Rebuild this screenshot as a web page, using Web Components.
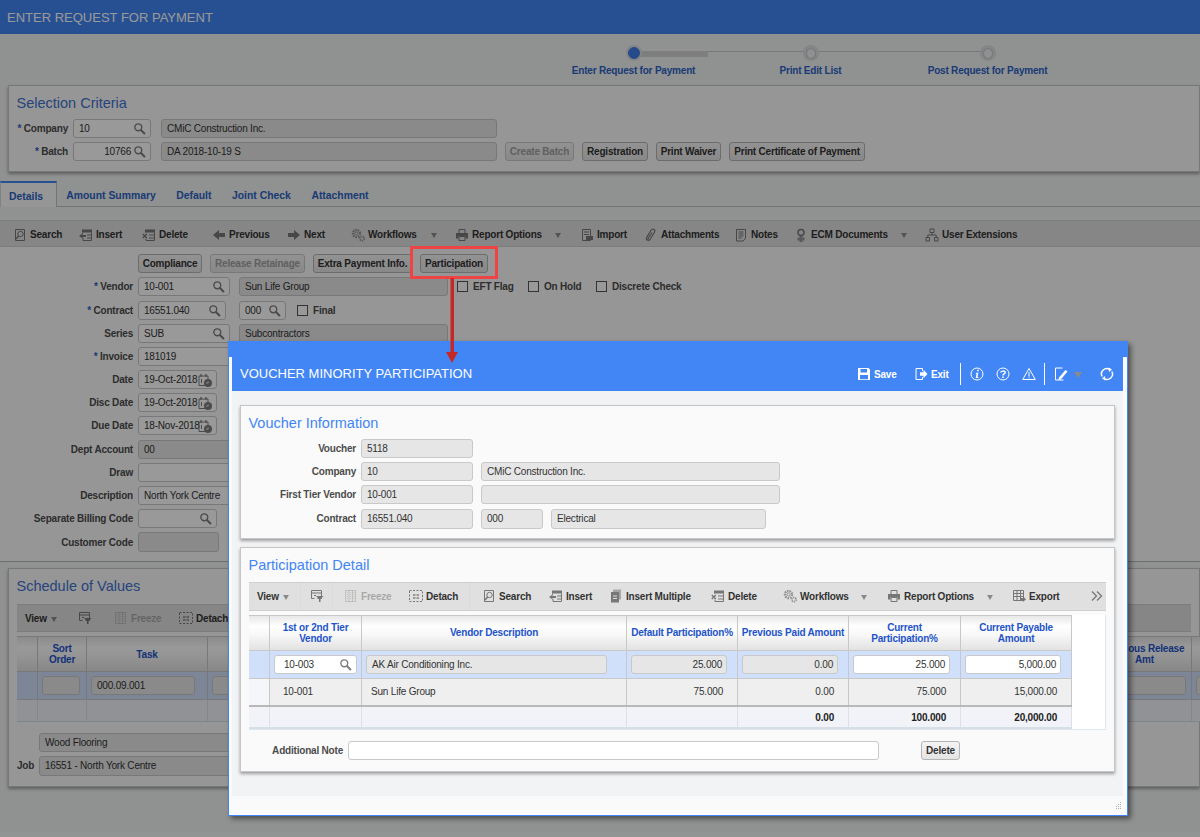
<!DOCTYPE html>
<html>
<head>
<meta charset="utf-8">
<title>Enter Request for Payment</title>
<style>
  html, body { margin: 0; height: 837px; overflow: hidden; background: #f6f7f7; }
  body { font: 10px "Liberation Sans", Arial, sans-serif; letter-spacing: -.2px; color: #333; }
</style>
</head>
<body>

<request-page>
  <page-header>ENTER REQUEST FOR PAYMENT</page-header>
  <train-stops>
    <train-stop active>Enter Request for Payment</train-stop>
    <train-stop>Print Edit List</train-stop>
    <train-stop last>Post Request for Payment</train-stop>
  </train-stops>

  <ui-panel heading="Selection Criteria" style="margin-left:8px">
    <form-row label="Company" req lw="51">
      <ui-field value="10" w="78" lookup></ui-field>
      <ui-field value="CMiC Construction Inc." w="336" kind="ro" style="margin-left:2px"></ui-field>
    </form-row>
    <form-row label="Batch" req lw="51">
      <ui-field value="10766" w="78" lookup align="right"></ui-field>
      <ui-field value="DA 2018-10-19 S" w="336" kind="ro" style="margin-left:2px"></ui-field>
      <ui-button w="69" disabled>Create Batch</ui-button>
      <ui-button w="66">Registration</ui-button>
      <ui-button w="65">Print Waiver</ui-button>
      <ui-button w="136">Print Certificate of Payment</ui-button>
    </form-row>
  </ui-panel>

  <tab-bar>
    <tab-item active w="57">Details</tab-item>
    <tab-item style="margin-left:-1px">Amount Summary</tab-item>
    <tab-item>Default</tab-item>
    <tab-item>Joint Check</tab-item>
    <tab-item>Attachment</tab-item>
  </tab-bar>

  <tool-bar start="13" style="margin-top:13px;padding-top:2px">
    <tool-item icon="search" w="66">Search</tool-item>
    <tool-item icon="insert" w="63">Insert</tool-item>
    <tool-item icon="delete" w="70">Delete</tool-item>
    <tool-item icon="prev" w="75">Previous</tool-item>
    <tool-item icon="next" w="64">Next</tool-item>
    <tool-item icon="gears" w="80">Workflows</tool-item>
    <tool-caret w="24"></tool-caret>
    <tool-item icon="print" w="100">Report Options</tool-item>
    <tool-caret w="25"></tool-caret>
    <tool-item icon="import" w="64">Import</tool-item>
    <tool-item icon="clip" w="90">Attachments</tool-item>
    <tool-item icon="notes" w="60">Notes</tool-item>
    <tool-item icon="ecm" w="107">ECM Documents</tool-item>
    <tool-caret w="24"></tool-caret>
    <tool-item icon="tree" w="100">User Extensions</tool-item>
  </tool-bar>

  <form-area>
    <form-row lw="125">
      <ui-button w="64">Compliance</ui-button>
      <ui-button w="95" disabled>Release Retainage</ui-button>
      <ui-button w="99">Extra Payment Info.</ui-button>
      <ui-button w="68">Participation</ui-button>
    </form-row>
    <form-row label="Vendor" req lw="125">
      <ui-field value="10-001" w="92" lookup></ui-field>
      <ui-field value="Sun Life Group" w="209" kind="ro" style="margin-left:1px"></ui-field>
      <check-box style="margin-left:1px;width:63px">EFT Flag</check-box>
      <check-box style="width:60px">On Hold</check-box>
      <check-box>Discrete Check</check-box>
    </form-row>
    <form-row label="Contract" req lw="125">
      <ui-field value="16551.040" w="88" lookup></ui-field>
      <ui-field value="000" w="47" lookup style="margin-left:5px"></ui-field>
      <check-box style="margin-left:3px">Final</check-box>
    </form-row>
    <form-row label="Series" lw="125">
      <ui-field value="SUB" w="92" lookup></ui-field>
      <ui-field value="Subcontractors" w="209" kind="ro" style="margin-left:1px"></ui-field>
    </form-row>
    <form-row label="Invoice" req lw="125"><ui-field value="181019" w="92"></ui-field></form-row>
    <form-row label="Date" lw="125"><ui-field value="19-Oct-2018" w="79" date></ui-field></form-row>
    <form-row label="Disc Date" lw="125"><ui-field value="19-Oct-2018" w="79" date></ui-field></form-row>
    <form-row label="Due Date" lw="125"><ui-field value="18-Nov-2018" w="79" date></ui-field></form-row>
    <form-row label="Dept Account" lw="125"><ui-field value="00" w="92" kind="ro"></ui-field></form-row>
    <form-row label="Draw" lw="125"><ui-field w="92"></ui-field></form-row>
    <form-row label="Description" lw="125"><ui-field value="North York Centre" w="92"></ui-field></form-row>
    <form-row label="Separate Billing Code" lw="125"><ui-field w="79" lookup></ui-field></form-row>
    <form-row label="Customer Code" lw="125"><ui-field w="81" kind="ro" style="height:20px"></ui-field></form-row>
  </form-area>

  <ui-panel heading="Schedule of Values" style="margin:6px 0 0 8px">
    <tool-bar start="8" style="height:28px;margin-top:2px">
      <tool-item w="26">View</tool-item>
      <tool-caret w="27"></tool-caret>
      <tool-item icon="filter" w="36"></tool-item>
      <tool-item icon="freeze" w="65" disabled>Freeze</tool-item>
      <tool-item icon="detach" w="60">Detach</tool-item>
    </tool-bar>
    <data-grid cols="21px 49px 121px 66px 824px 94px 80px">
      <grid-row kind="head" h="36">
        <grid-cell></grid-cell><grid-cell>Sort<br>Order</grid-cell><grid-cell>Task</grid-cell><grid-cell>Code</grid-cell><grid-cell></grid-cell><grid-cell>Previous Release<br>Amt</grid-cell><grid-cell></grid-cell>
      </grid-row>
      <grid-row kind="sel" h="28">
        <grid-cell></grid-cell>
        <grid-cell pad="4"><ui-field w="38" kind="ro"></ui-field></grid-cell>
        <grid-cell pad="4"><ui-field value="000.09.001" w="104" kind="ro"></ui-field></grid-cell>
        <grid-cell pad="4"><ui-field w="58" kind="ro"></ui-field></grid-cell>
        <grid-cell></grid-cell>
        <grid-cell pad="4"><ui-field w="84" kind="ro"></ui-field></grid-cell>
        <grid-cell pad="4"><ui-field w="70" kind="ro"></ui-field></grid-cell>
      </grid-row>
      <grid-row kind="plain" h="22">
        <grid-cell></grid-cell><grid-cell></grid-cell><grid-cell></grid-cell><grid-cell></grid-cell><grid-cell></grid-cell><grid-cell></grid-cell><grid-cell></grid-cell>
      </grid-row>
    </data-grid>
    <form-row lw="14" style="margin-top:6px;--label-gap:0px">
      <ui-field value="Wood Flooring" w="400" kind="ro"></ui-field>
    </form-row>
    <form-row label="Job" lw="17" gap="0" style="--label-gap:5px;--label-align:left">
      <ui-field value="16551 - North York Centre" w="400" kind="ro" style="height:20px"></ui-field>
    </form-row>
  </ui-panel>
</request-page>

<page-scrim></page-scrim>

<modal-dialog heading="VOUCHER MINORITY PARTICIPATION">
  <tool-item slot="tools" icon="save" w="57">Save</tool-item>
  <tool-item slot="tools" icon="exit" w="46">Exit</tool-item>
  <tool-sep slot="tools"></tool-sep>
  <tool-item slot="tools" icon="info" w="26" center style="margin-left:3px"></tool-item>
  <tool-item slot="tools" icon="help" w="26" center></tool-item>
  <tool-item slot="tools" icon="warn" w="25" center></tool-item>
  <tool-sep slot="tools" style="margin-left:3px"></tool-sep>
  <tool-item slot="tools" icon="edit" w="26" center style="margin-left:3px"></tool-item>
  <tool-caret slot="tools" w="20" big></tool-caret>
  <tool-item slot="tools" icon="refresh" w="26" center></tool-item>

  <ui-panel heading="Voucher Information" accent style="padding-bottom:9px">
    <form-row label="Voucher" lw="107"><ui-field value="5118" w="112" kind="ro"></ui-field></form-row>
    <form-row label="Company" lw="107">
      <ui-field value="10" w="112" kind="ro"></ui-field>
      <ui-field value="CMiC Construction Inc." w="299" kind="ro"></ui-field>
    </form-row>
    <form-row label="First Tier Vendor" lw="107">
      <ui-field value="10-001" w="112" kind="ro"></ui-field>
      <ui-field w="299" kind="ro"></ui-field>
    </form-row>
    <form-row label="Contract" lw="107">
      <ui-field value="16551.040" w="112" kind="ro" style="height:20px"></ui-field>
      <ui-field value="000" w="62" kind="ro" style="height:20px"></ui-field>
      <ui-field value="Electrical" w="215" kind="ro" style="height:20px"></ui-field>
    </form-row>
  </ui-panel>

  <ui-panel heading="Participation Detail" accent style="margin-top:8px">
    <tool-bar start="8" style="height:29px;margin-top:1px">
      <tool-item w="26">View</tool-item>
      <tool-caret w="18" sep></tool-caret>
      <tool-item icon="filter" w="32" center sep></tool-item>
      <tool-item icon="freeze" w="65" disabled style="margin-left:11px">Freeze</tool-item>
      <tool-item icon="detach" w="61" sep>Detach</tool-item>
      <tool-item icon="search" w="67" style="margin-left:12px">Search</tool-item>
      <tool-item icon="insert" w="60">Insert</tool-item>
      <tool-item icon="multi" w="102">Insert Multiple</tool-item>
      <tool-item icon="delete" w="72">Delete</tool-item>
      <tool-item icon="gears" w="78">Workflows</tool-item>
      <tool-caret w="26"></tool-caret>
      <tool-item icon="print" w="100">Report Options</tool-item>
      <tool-caret w="25"></tool-caret>
      <tool-item icon="export" w="78">Export</tool-item>
      <tool-item icon="more" w="14" center></tool-item>
    </tool-bar>
    <data-grid cols="21px 92px 265px 111px 111px 112px 111px" edge>
      <grid-row kind="head" h="36">
        <grid-cell></grid-cell>
        <grid-cell>1st or 2nd Tier<br>Vendor</grid-cell>
        <grid-cell>Vendor Description</grid-cell>
        <grid-cell>Default Participation%</grid-cell>
        <grid-cell>Previous Paid Amount</grid-cell>
        <grid-cell>Current<br>Participation%</grid-cell>
        <grid-cell>Current Payable<br>Amount</grid-cell>
      </grid-row>
      <grid-row kind="sel" h="28">
        <grid-cell></grid-cell>
        <grid-cell pad="4"><ui-field value="10-003" w="83" kind="white" lookup inset="9"></ui-field></grid-cell>
        <grid-cell pad="4"><ui-field value="AK Air Conditioning Inc." w="241" kind="ro"></ui-field></grid-cell>
        <grid-cell pad="4"><ui-field value="25.000" w="96" kind="ro" align="right"></ui-field></grid-cell>
        <grid-cell pad="4"><ui-field value="0.00" w="96" kind="ro" align="right"></ui-field></grid-cell>
        <grid-cell pad="4"><ui-field value="25.000" w="97" kind="white" align="right"></ui-field></grid-cell>
        <grid-cell pad="4"><ui-field value="5,000.00" w="96" kind="white" align="right"></ui-field></grid-cell>
      </grid-row>
      <grid-row kind="alt" h="28">
        <grid-cell gutter></grid-cell>
        <grid-cell pad="13">10-001</grid-cell>
        <grid-cell pad="9">Sun Life Group</grid-cell>
        <grid-cell align="right">75.000</grid-cell>
        <grid-cell align="right">0.00</grid-cell>
        <grid-cell align="right">75.000</grid-cell>
        <grid-cell align="right">15,000.00</grid-cell>
      </grid-row>
      <grid-row kind="total" h="22">
        <grid-cell></grid-cell><grid-cell></grid-cell><grid-cell></grid-cell><grid-cell></grid-cell>
        <grid-cell align="right"><b>0.00</b></grid-cell>
        <grid-cell align="right"><b>100.000</b></grid-cell>
        <grid-cell align="right"><b>20,000.00</b></grid-cell>
      </grid-row>
    </data-grid>
    <form-row label="Additional Note" lw="94" style="margin:7px 0 1px">
      <ui-field w="531" kind="white"></ui-field>
      <ui-button w="39" style="margin-left:34px">Delete</ui-button>
    </form-row>
  </ui-panel>
</modal-dialog>

<call-out></call-out>

<script>
/* 1 ▸ icons, all on a 14 box. stroke and fill come from --ic */
const S = 'fill="none" stroke="var(--ic)"';
const F = 'fill="var(--ic)"';
const ICONS = {
  search:  `<path ${S} d="M2.5 1.5h9v11h-9z"/><circle ${S} cx="7.5" cy="6" r="2.7"/><path ${S} stroke-width="1.5" d="M5.5 8 3 11"/>`,
  insert:  `<path ${F} d="M3 1.5h10v3H3z"/><path ${S} d="M3.5 4.5v1.5M12.5 4.5v8h-8.500V10"/><path ${S} d="M8 7h4.500M8 10h4.500"/><path ${F} d="M0 8 3.500 5.500V7H7v2H3.500v1.500z"/>`,
  delete:  `<path ${F} d="M3 1.500h10v3H3z"/><path ${S} d="M3.500 4.500v.5M12.500 4.500v8h-8.500v-2M7 7h5.500M7 10h5.500"/><path ${S} stroke-width="1.400" d="M.8 6l4 4M4.800 6l-4 4"/>`,
  prev:    `<path ${F} d="M1 7 7 2v3h6v4H7v3z"/>`,
  next:    `<path ${F} d="M13 7 7 2v3H1v4h6v3z"/>`,
  gears:   `<g opacity=".75"><circle ${S} stroke-width="2.2" stroke-dasharray="1.6 .9" cx="5.5" cy="5.5" r="3.6"/><circle ${S} cx="5.5" cy="5.5" r="1.6"/><circle ${S} stroke-width="1.8" stroke-dasharray="1.2 .8" cx="11" cy="10.6" r="2.1"/></g>`,
  print:   `<path ${S} d="M4 5V1.5h6V5"/><path ${F} d="M1 5h12v5.5h-2.5V8h-7v2.5H1z"/><path ${S} d="M4 8.5h6v4H4z"/>`,
  import:  `<path ${S} d="M2.5 1.5h8v11h-8z"/><path ${S} d="M4 4h5M4 6.5h5"/><path ${F} d="M6 8h7v4H6z"/>`,
  clip:    `<path ${S} stroke-width="1.2" d="M3.5 12.5c-1.5-.6-1.2-2.3-.6-3.4l4-6.6c.8-1.3 2.3-1.6 3.2-1 .9.6.8 1.9.2 3l-4.2 7c-.5.8-1.3 1-1.8.6-.5-.4-.4-1.1 0-1.8L8 4.5"/>`,
  notes:   `<path ${S} d="M2.5 1.5h9v9l-2.5 2.5h-6.5z"/><path ${S} d="M4.5 4h5M4.5 6h5M4.5 8h5M4.5 10h3"/>`,
  ecm:     `<circle ${S} stroke-width="1.5" cx="7" cy="4.5" r="3"/><path ${F} d="M5.5 8h3v1.5h2v3h-2V14h-3v-1.5h-2v-3h2z" opacity=".7"/>`,
  tree:    `<path ${S} d="M5 1h4v3.5H5zM1 9.5h3.5V13H1zM9.5 9.5H13V13H9.5zM7 4.5V7M2.8 9.5V7h8.4v2.5"/>`,
  filter:  `<path ${S} d="M1.5 1.5h10v8h-4M1.5 1.5v8h3M1.5 4h10M4 6.5h2"/><path ${F} d="M6 7h7.5l-3 3v3H9v-3z"/>`,
  freeze:  `<path ${S} d="M1.5 1.5h10v11h-10zM5 1.5v11M8.5 1.5v11" opacity=".55"/><path ${S} stroke-dasharray="1 1" d="M3.2 3v8M6.8 3v8M10 3v8" opacity=".55"/>`,
  detach:  `<path ${S} stroke-dasharray="2 1.5" d="M.5 1.5h13v11H.5z"/><path ${F} opacity=".65" d="M4 5h6v5H4z"/><path fill="none" stroke="#eee" stroke-width=".8" d="M4 7.5h6M7 5v5"/>`,
  multi:   `<path ${F} opacity=".55" d="M4 .5h8v10H4z"/><path ${F} d="M2 3h8v10.5H2z"/><path fill="none" stroke="#e0e0e0" d="M4 7h4M4 9.5h4"/>`,
  export:  `<path ${S} d="M1.5 1.5h10v10h-10zM1.5 4.5h10M1.5 7.5h10M5 1.5v10M8.5 1.5v10"/><path ${F} d="M8 9h3V7.5l3 2.8-3 2.8v-1.6H8z"/>`,
  more:    `<path ${S} stroke-width="1.3" d="M2 2.5 6.5 7 2 11.5M7 2.5 11.5 7 7 11.5"/>`,
  mag:     `<circle ${S} stroke-width="1.5" cx="5.7" cy="5.7" r="3.7"/><path ${S} stroke-width="2.2" stroke-linecap="round" d="M8.8 8.8 12.3 12.3"/>`,
  cal:     `<path ${S} d="M1 3h9v9.5H1z"/><path ${S} stroke-width="1.3" d="M3 1v3M8 1v3"/><path ${S} d="M3.5 6v4"/><circle ${F} cx="10" cy="10" r="4"/><path fill="none" stroke="#eee" stroke-width=".9" d="M8 10h2.2V8.5"/>`,
  save:    `<path ${F} fill-rule="evenodd" d="M1 1h10.500L13 2.500V13H1zM3.500 2v3.500H10V2zM3 8v4.200h8V8z"/>`,
  exit:    `<path ${S} d="M8.500 4V1.500H2v11h6.500V10"/><path ${F} d="M6 5.300h3.500V2.800L13.500 7 9.500 11.200V8.700H6z"/>`,
  info:    `<circle ${S} cx="7" cy="7" r="6"/><path ${F} d="M7.200 2.800h1.600v1.500H7.200zM6 5.800h2.400l-.9 4.300h1l-.2 1H5.700l.9-4.300h-.8z"/>`,
  help:    `<circle ${S} cx="7" cy="7" r="6"/><path ${S} stroke-width="1.5" d="M4.800 5.500C5 3.800 9.200 3.500 9.200 5.600 9.200 7 7 7 7 8.500"/><path ${F} d="M6.200 9.500h1.600V11H6.200z"/>`,
  warn:    `<path ${S} d="M7 1.500 13.300 12.500H.7z"/><path ${S} d="M7 5v4.500M7 10.300v1"/>`,
  edit:    `<path ${S} d="M8.500 1H1.500v12h8"/><path ${F} d="M5 10.500 11.500 3l2 1.600L7 12.200l-2.500.8z"/>`,
  refresh: `<path ${S} stroke-width="1.5" d="M2.200 9.500A5.300 5.300 0 0 1 9.800 2.500M11.800 4.500A5.300 5.300 0 0 1 4.200 11.500"/><path ${F} d="M8.500 .5 12 2.500 9 5zM5.500 13.500 2 11.500 5 9z"/>`
};

/* 2 ▸ helper: every element gets an open shadow root from a string */
class Base extends HTMLElement {
  constructor() {
    super();
    this.attachShadow({ mode: 'open' });
  }
  connectedCallback() {
    this.shadowRoot.innerHTML = this.render();
    const w = this.getAttribute('w');
    if (w) this.style.width = w + 'px';
  }
  render() { return '<slot></slot>'; }
}

/* 3 ▸ page scaffolding */
class RequestPage extends Base {
  render() {
    return `<style>
      :host { display: block; height: 832px; background: #f0f2f2; overflow: hidden; }
    </style><slot></slot>`;
  }
}

class PageHeader extends Base {
  render() {
    return `<style>
      :host { display: flex; align-items: center; height: 34px; padding-left: 7px; box-sizing: border-box;
              background: #4285f4; color: #fff; font-size: 13px; letter-spacing: 0; }
    </style><slot></slot>`;
  }
}

class PageScrim extends Base {
  render() {
    return `<style>
      :host { display: block; position: fixed; inset: 0; background: rgba(0,0,0,.4); z-index: 1; }
    </style>`;
  }
}

/* 4 ▸ train */
class TrainStops extends Base {
  render() {
    return `<style>
      :host { display: flex; height: 51px; box-sizing: border-box; padding: 10px 0 0 545px; }
    </style><slot></slot>`;
  }
}

class TrainStop extends Base {
  render() {
    const on = this.hasAttribute('active');
    const last = this.hasAttribute('last');
    const rail = last
      ? 'linear-gradient(#c8c8c8,#c8c8c8) no-repeat 0 7px / 50% 1px'
      : on
        ? 'linear-gradient(#d2d2d2,#d2d2d2) no-repeat 89px 7px / 74px 6px, linear-gradient(#c8c8c8,#c8c8c8) no-repeat 100% 7px / 50% 1px'
        : 'linear-gradient(#c8c8c8,#c8c8c8) no-repeat 0 7px / 100% 1px';
    return `<style>
      :host { display: flex; flex-direction: column; align-items: center; width: 177px; }
      .rail { align-self: stretch; height: 18px; display: flex; justify-content: center; align-items: center; background: ${rail}; }
      .dot { width: 16px; height: 16px; border-radius: 50%; background: #dcdee0; display: flex; align-items: center; justify-content: center; }
      .dot i { display: block; border-radius: 50%; box-sizing: border-box;
               background: ${on ? '#3f7de8' : '#eef0f2'}; border: 1px solid ${on ? '#3f7de8' : '#c4c6c8'}; width: ${on ? 12 : 10}px; height: ${on ? 12 : 11}px; }
      .lb { margin-top: 3px; font-weight: 700; color: #2b63c4; white-space: nowrap; line-height: 12px; }
    </style>
    <div class="rail"><div class="dot"><i></i></div></div>
    <div class="lb"><slot></slot></div>`;
  }
}

/* 5 ▸ panels, rows and controls */
class UiPanel extends Base {
  render() {
    const col = this.hasAttribute('accent') ? '#4285f4' : '#3f73d0';
    return `<style>
      :host { display: block; box-sizing: border-box; padding: 9px 8px 10px; background: #fafafa;
              border: 1px solid #c6c6c6; box-shadow: 0 2px 3px rgba(0,0,0,.35); }
      h2 { margin: 0 0 6px -.5px; height: 18px; font: 400 14.5px/16px "Liberation Sans", Arial, sans-serif; letter-spacing: 0; color: ${col}; }
      .body { display: flex; flex-direction: column; gap: 4.18px; }
    </style>
    <h2>${this.getAttribute('heading')}</h2>
    <div class="body"><slot></slot></div>`;
  }
}

class FormRow extends Base {
  render() {
    const req = this.hasAttribute('req') ? '<span class="st">*</span> ' : '';
    const label = this.getAttribute('label') || '';
    return `<style>
      :host { display: flex; align-items: center; gap: ${this.getAttribute('gap') || 8}px; min-height: 19px; }
      .lb { flex: none; width: ${this.getAttribute('lw')}px; margin-right: var(--label-gap, -3px); text-align: var(--label-align, right);
            font-weight: 700; color: #4c4c4c; white-space: nowrap; }
      .st { color: #2b63c4; }
    </style>
    <div class="lb">${req}${label}</div><slot></slot>`;
  }
}

class FormArea extends Base {
  render() {
    return `<style>
      :host { display: flex; flex-direction: column; gap: 4.18px; box-sizing: border-box; padding: 7px 0 9px 8px;
              background: #fafafa; border-bottom: 1px solid #b8b8b8; }
    </style><slot></slot>`;
  }
}

class UiField extends Base {
  render() {
    const kind = this.getAttribute('kind') || 'white';
    const bg = kind === 'ro' ? '#e6e6e6' : '#fff';
    const align = this.getAttribute('align') || 'left';
    const inset = this.getAttribute('inset') || 5;
    let icon = '';
    if (this.hasAttribute('lookup')) icon = `<svg viewBox="0 0 14 14" width="13" height="13">${ICONS.mag}</svg>`;
    if (this.hasAttribute('date')) icon = `<svg viewBox="0 0 14 14" width="14" height="14">${ICONS.cal}</svg>`;
    return `<style>
      :host { display: flex; flex: none; align-items: center; box-sizing: border-box; height: 19px; min-width: 0;
              padding: 0 4px 0 ${inset}px; gap: 2px; overflow: hidden;
              background: ${bg}; border: 1px solid #c9c9c9; border-radius: 3px; --ic: #7d7d7d; }
      span { flex: 1; min-width: 0; white-space: nowrap; text-align: ${align}; color: #333; font-weight: 400; }
      svg { flex: none; }
    </style><span>${this.getAttribute('value') || ''}</span>${icon}`;
  }
}

class UiButton extends Base {
  render() {
    const off = this.hasAttribute('disabled');
    return `<style>
      :host { display: inline-flex; flex: none; align-items: center; justify-content: center; box-sizing: border-box; height: 19px;
              background: linear-gradient(#f4f4f4,#e4e4e4); border: 1px solid ${off ? '#c8c8c8' : '#b4b4b4'}; border-radius: 3px;
              font-weight: 700; color: ${off ? '#a0a0a0' : '#333'}; white-space: nowrap; }
    </style><slot></slot>`;
  }
}

class CheckBox extends Base {
  render() {
    return `<style>
      :host { display: inline-flex; flex: none; align-items: center; gap: 5px; font-weight: 700; color: #4c4c4c; white-space: nowrap; }
      i { display: block; box-sizing: border-box; width: 11px; height: 11px; background: #fff; border: 1px solid #555; }
    </style><i></i><slot></slot>`;
  }
}

/* 6 ▸ tabs */
class TabBar extends Base {
  render() {
    return `<style>
      :host { display: flex; height: 26px; margin-top: 9px; box-sizing: border-box; border-bottom: 1px solid #c0c2c2; }
    </style><slot></slot>`;
  }
}

class TabItem extends Base {
  render() {
    const on = this.hasAttribute('active');
    return `<style>
      :host { display: flex; align-items: center; box-sizing: border-box; height: 26px; font-weight: 700; font-size: 10.4px; letter-spacing: 0; color: #2b63c4;
              padding: 2px 10.25px 0 ${on ? '8px' : '10.25px'}; white-space: nowrap;
              ${on ? 'background:#fafafa; border-top:2px solid #4285f4; border-right:1px solid #c0c2c2; border-left:1px solid #d8d8d8;' : ''} }
    </style><slot></slot>`;
  }
}

/* 7 ▸ toolbars */
class ToolBar extends Base {
  render() {
    return `<style>
      :host { display: flex; align-items: center; box-sizing: border-box; height: 27px; padding-left: ${this.getAttribute('start') || 0}px;
              background: #e0e0e0; border-top: 1px solid #cfcfcf; border-bottom: 1px solid #cfcfcf; overflow: hidden; }
    </style><slot></slot>`;
  }
}

class ToolItem extends Base {
  render() {
    const name = this.getAttribute('icon');
    const off = this.hasAttribute('disabled');
    const color = off ? '#a8a8a8' : 'var(--tool-color, #333)';
    const sep = this.hasAttribute('sep') ? 'border-right:1px solid #d3dde8;' : '';
    const icon = name ? `<svg viewBox="0 0 14 14" width="14" height="14" ${off ? 'opacity=".55"' : ''}>${ICONS[name]}</svg>` : '';
    return `<style>
      :host { display: flex; flex: none; align-items: center; align-self: stretch; box-sizing: border-box; gap: 3px; font-weight: 700;
              color: ${color}; white-space: nowrap; ${sep} ${this.hasAttribute('center') ? 'justify-content:center;' : ''}
              --ic: var(--tool-icon, #777); }
      svg { flex: none; }
    </style>${icon}<slot></slot>`;
  }
}

class ToolCaret extends Base {
  render() {
    const big = this.hasAttribute('big');
    const sep = this.hasAttribute('sep') ? 'border-right:1px solid #d3dde8;' : '';
    return `<style>
      :host { display: flex; flex: none; align-items: center; align-self: stretch; box-sizing: border-box; ${sep} }
      i { display: block; width: 0; height: 0; border: solid transparent; border-width: ${big ? '6px 4.5px 0' : '5px 3.5px 0'};
          border-top-color: #8a8a8a; margin-top: 2px; }
    </style><i></i>`;
  }
}

class ToolSep extends Base {
  render() {
    return `<style>
      :host { display: block; flex: none; width: 1px; height: 22px; background: #fff; }
    </style>`;
  }
}

/* 8 ▸ grid */
class DataGrid extends Base {
  render() {
    this.style.setProperty('--cols', this.getAttribute('cols'));
    const edge = this.hasAttribute('edge') ? 'border-right:1px solid #dfe6ee; border-bottom:1px solid #dfe6ee;' : '';
    return `<style>
      :host { display: block; background: #fff; box-sizing: border-box; ${edge} }
    </style><slot></slot>`;
  }
}

const ROW_STYLES = {
  head:  '--cell-bg: linear-gradient(#e8e8e8,#fff 30%,#f8f8f8 55%,#e2e2e2); --cell-fg: #1d54c9; --cell-weight: 700; --cell-line: #c8c8c8; --cell-align: center;',
  sel:   '--cell-bg: #d0e0fb; --cell-line: #c8c8c8;',
  alt:   '--cell-bg: #efefef; --cell-line: #c8c8c8; --gutter-bg: #f5f6fa;',
  plain: '--cell-bg: #f2f4f8; --cell-line: #dde1e6;',
  total: '--cell-bg: #f1f3f8; --cell-line: #dde1e6; --cell-fg: #222; --cell-top: 2px;'
};

class GridRow extends Base {
  render() {
    const kind = this.getAttribute('kind');
    const under = { head: '#c8c8c8', sel: '#c8c8c8', alt: '#b8b8b8', plain: '#d6dee6', total: '#d6dee6' }[kind];
    const top = kind === 'head' ? 'border-top: 1px solid #c8c8c8;' : '';
    return `<style>
      :host { display: grid; grid-template-columns: var(--cols); width: fit-content; box-sizing: border-box; height: ${this.getAttribute('h')}px;
              border-bottom: ${kind === 'total' || kind === 'alt' ? 2 : 1}px solid ${under}; ${top} ${ROW_STYLES[kind]} }
    </style><slot></slot>`;
  }
}

class GridCell extends Base {
  render() {
    const align = this.getAttribute('align');
    const pad = this.getAttribute('pad');
    const bg = this.hasAttribute('gutter') ? 'var(--gutter-bg)' : 'var(--cell-bg)';
    const just = align === 'right' ? 'flex-end' : 'var(--cell-just, flex-start)';
    return `<style>
      :host { display: flex; align-items: center; box-sizing: border-box; justify-content: ${just}; overflow: hidden; min-width: 0;
              background: ${bg}; border-right: 1px solid var(--cell-line); color: var(--cell-fg, #333);
              font-weight: var(--cell-weight, 400); line-height: 11px;
              padding: var(--cell-top, 0) ${align === 'right' ? 14 : 0}px 0 ${pad || 0}px; }
      div { flex: 1; text-align: var(--cell-align, ${align || 'left'}); white-space: nowrap; }
    </style><div><slot></slot></div>`;
  }
}

/* 9 ▸ dialog and the red callout on top */
class ModalDialog extends Base {
  render() {
    return `<style>
      :host { display: flex; flex-direction: column; position: absolute; left: 228px; top: 341px; width: 900px; height: 475px;
              box-sizing: border-box; z-index: 2; background: #fafafa; border: 1px solid #4285f4; border-top-width: 0;
              box-shadow: 3px 3px 5px rgba(0,0,0,.45); }
      .cap { flex: none; height: 16px; margin: 0 -1px; background: #4285f4; }
      .head { flex: none; display: flex; align-items: center; height: 34px; margin: 0 4px 0 3px; padding: 0 3px 0 8px; background: #4285f4;
              color: #fff; --tool-color: #fff; --tool-icon: #fff; }
      .title { font-size: 13px; letter-spacing: 0; white-space: nowrap; margin-bottom: 2px; }
      .tools { display: flex; align-items: center; margin-left: auto; height: 24px; }
      .body { flex: none; height: 405px; box-sizing: border-box; margin: 0 4px 0 3px; padding: 14px 8px 0; background: #f2f3f5; }
      .grip { align-self: flex-end; margin: 6px 5px 0 0; }
    </style>
    <div class="cap"></div>
    <div class="head">
      <div class="title">${this.getAttribute('heading')}</div>
      <div class="tools"><slot name="tools"></slot></div>
    </div>
    <div class="body"><slot></slot></div>
    <svg class="grip" width="6" height="8" viewBox="0 0 6 8" fill="#b0b0b0">
      <rect x="4" y="0" width="1" height="1"/><rect x="4" y="2" width="1" height="1"/><rect x="2" y="2" width="1" height="1"/>
      <rect x="4" y="4" width="1" height="1"/><rect x="2" y="4" width="1" height="1"/><rect x="0" y="4" width="1" height="1"/>
      <rect x="4" y="6" width="1" height="1"/><rect x="2" y="6" width="1" height="1"/><rect x="0" y="6" width="1" height="1"/>
    </svg>`;
  }
}

class CallOut extends Base {
  render() {
    return `<style>
      :host { display: block; position: absolute; left: 410px; top: 246px; width: 88px; height: 33px; box-sizing: border-box;
              border: 3px solid #ef4444; z-index: 3; }
      svg { position: absolute; left: 33px; top: 29px; overflow: visible; }
    </style>
    <svg width="12" height="90" viewBox="0 0 12 90">
      <path d="M4.5 0h3.5v76h-3.5z" fill="#c62828"/>
      <path d="M0 74h12l-6 11z" fill="#c62828"/>
    </svg>`;
  }
}

/* 10 ▸ register */
const TAGS = {
  'request-page': RequestPage, 'page-header': PageHeader, 'page-scrim': PageScrim,
  'train-stops': TrainStops, 'train-stop': TrainStop, 'ui-panel': UiPanel, 'form-row': FormRow,
  'form-area': FormArea, 'ui-field': UiField, 'ui-button': UiButton, 'check-box': CheckBox,
  'tab-bar': TabBar, 'tab-item': TabItem, 'tool-bar': ToolBar, 'tool-item': ToolItem,
  'tool-caret': ToolCaret, 'tool-sep': ToolSep, 'data-grid': DataGrid, 'grid-row': GridRow,
  'grid-cell': GridCell, 'modal-dialog': ModalDialog, 'call-out': CallOut
};
Object.entries(TAGS).forEach(([tag, cls]) => customElements.define(tag, cls));
</script>
</body>
</html>
